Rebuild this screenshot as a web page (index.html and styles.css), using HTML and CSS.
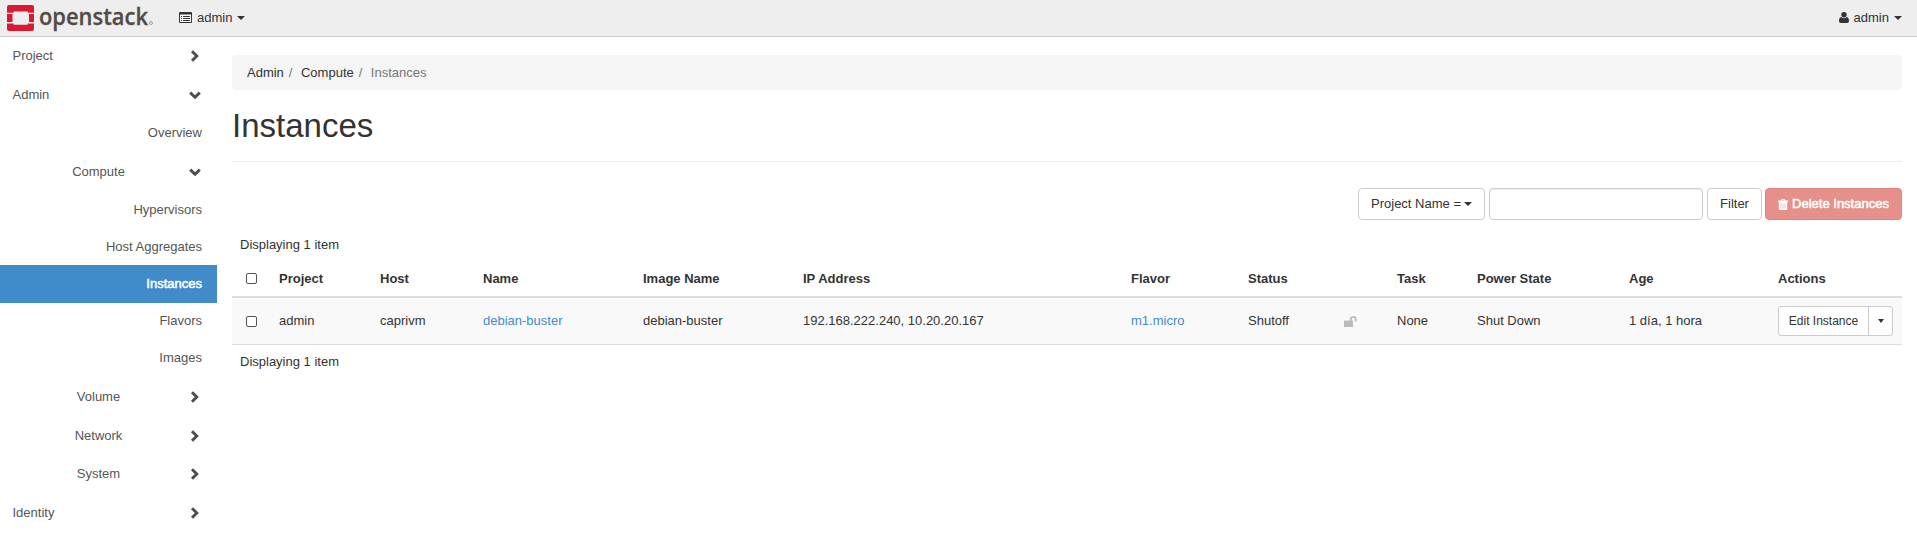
FILE: index.html
```html
<!DOCTYPE html>
<html lang="en">
<head>
<meta charset="utf-8">
<title>Instances</title>
<link rel="stylesheet" href="styles.css">
</head>
<body>
<svg width="0" height="0" class="defs">
  <symbol id="right" viewBox="0 0 12 12"><path d="M3 1.2 L7.8 6 L3 10.8" fill="none" stroke="#4d4d4d" stroke-width="2.9"/></symbol>
  <symbol id="down" viewBox="0 0 12 12"><path d="M1.2 3.6 L6 8.2 L10.8 3.6" fill="none" stroke="#4d4d4d" stroke-width="2.9"/></symbol>
</svg>
<header class="topbar">
  <a class="brand">
    <svg width="150" height="36" viewBox="0 0 150 36">
      <g fill="#da1a32">
        <path d="M9 5h23a2 2 0 0 1 2 2v5.700h-6.300v-1.200h-14v1.200H7V7a2 2 0 0 1 2-2z"/>
        <path d="M7 23.500h6.700v1.300h14v-1.300H34V29a2 2 0 0 1-2 2H9a2 2 0 0 1-2-2z"/>
        <path d="M7 14h5.500v8H7zM29 14h5v8h-5z"/>
      </g>
      <text class="wordmark" x="39" y="24.600" textLength="109" lengthAdjust="spacingAndGlyphs">openstack</text>
      <circle cx="151" cy="23" r="1.500" class="reg"/>
    </svg>
  </a>
  <a class="context">
    <svg width="13" height="11" viewBox="0 0 13 11"><path d="M.5 .5h12v10H.5z" fill="#fff" stroke="#333"/><path d="M1 1h11v1.500H1zM2 4h1v1H2zM4 4h7v1H4zM2 6h1v1H2zM4 6h7v1H4zM2 8h1v1H2zM4 8h7v1H4z" fill="#333"/></svg>
    <span>admin</span><i class="caret"></i>
  </a>
  <a class="user">
    <svg width="10" height="11" viewBox="0 0 10 11"><circle cx="5" cy="2.800" r="2.700" fill="#333"/><path d="M2.200 5a4 4 0 0 0 5.600 0C9.400 5.200 10 6.700 10 9c0 1.200-.8 2-1.800 2H1.800C.8 11 0 10.200 0 9c0-2.300.6-3.800 2.200-4z" fill="#333"/></svg>
    <span>admin</span><i class="caret"></i>
  </a>
</header>
<div class="layout">
  <nav class="sidebar">
    <a class="row top">Project<svg class="chev"><use href="#right"/></svg></a>
    <a class="row top">Admin<svg class="chev"><use href="#down"/></svg></a>
    <a class="row leaf tall">Overview</a>
    <a class="row group"><span>Compute</span><svg class="chev"><use href="#down"/></svg></a>
    <a class="row leaf">Hypervisors</a>
    <a class="row leaf">Host Aggregates</a>
    <a class="row leaf active">Instances</a>
    <a class="row leaf">Flavors</a>
    <a class="row leaf last">Images</a>
    <a class="row group"><span>Volume</span><svg class="chev"><use href="#right"/></svg></a>
    <a class="row group"><span>Network</span><svg class="chev"><use href="#right"/></svg></a>
    <a class="row group"><span>System</span><svg class="chev"><use href="#right"/></svg></a>
    <a class="row top">Identity<svg class="chev"><use href="#right"/></svg></a>
  </nav>
  <main class="content">
    <div class="breadcrumb"><a>Admin</a><i>/</i><a>Compute</a><i>/</i><span>Instances</span></div>
    <h1>Instances</h1>
    <div class="actions">
      <button class="btn select">Project Name =<i class="caret"></i></button>
      <input class="search" type="text">
      <button class="btn filter">Filter</button>
      <button class="btn danger"><svg width="10" height="11" viewBox="0 0 10 11"><path fill="#fff" fill-rule="evenodd" d="M0 1.500h3L3.500 0h3L7 1.500h3V3H0zM4 1.500h2L5.800 .8H4.200zM.8 3h8.400V10a1 1 0 0 1-1 1H1.800a1 1 0 0 1-1-1zM2.700 4.500v5h.5v-5zM4.750 4.500v5h.5v-5zM6.800 4.500v5h.5v-5z"/></svg>Delete Instances</button>
    </div>
    <div class="count">Displaying 1 item</div>
    <table class="grid">
      <colgroup><col class="c1"><col class="c2"><col class="c3"><col class="c4"><col class="c4"><col class="c6"><col class="c7"><col class="c8"><col class="c9"><col class="c10"><col class="c11"><col class="c12"><col class="c13"></colgroup>
      <thead><tr><th><i class="check"></i></th><th>Project</th><th>Host</th><th>Name</th><th>Image Name</th><th>IP Address</th><th>Flavor</th><th>Status</th><th></th><th>Task</th><th>Power State</th><th>Age</th><th>Actions</th></tr></thead>
      <tbody><tr><td><i class="check"></i></td><td>admin</td><td>caprivm</td><td><a class="link">debian-buster</a></td><td>debian-buster</td><td>192.168.222.240, 10.20.20.167</td><td><a class="link">m1.micro</a></td><td>Shutoff</td>
        <td><svg class="lock" width="13" height="11" viewBox="0 0 13 11"><rect x="0" y="4.500" width="9" height="6.500" rx=".6" fill="#bbb"/><path d="M6.800 5V3.300a2.450 2.450 0 0 1 4.900 0V5.500" fill="none" stroke="#bbb" stroke-width="1.700"/></svg></td>
        <td>None</td><td>Shut Down</td><td>1 día, 1 hora</td>
        <td><div class="split"><span class="edit">Edit Instance</span><span class="more"><i class="caret"></i></span></div></td></tr></tbody>
    </table>
    <div class="count bottom">Displaying 1 item</div>
  </main>
</div>
</body>
</html>
```
FILE: styles.css
```css
* { box-sizing: border-box; }
body { margin: 0; background: #fff; color: #333; font: 13px/18px "Liberation Sans", Arial, sans-serif; }
.defs { display: block; height: 0; }
.caret { display: inline-block; border: solid transparent; border-width: 4px 4px 0; border-top-color: #333; }

.topbar { height: 37px; background: #eee; border-bottom: 1px solid #ccc; display: flex; align-items: flex-start; }
.brand { width: 179px; height: 36px; }
.brand svg { display: block; overflow: visible; }
.wordmark { font: 600 23.500px "Open Sans", sans-serif; fill: #544b45; stroke: #544b45; stroke-width: .3px; }
.reg { fill: none; stroke: #999; stroke-width: .9; }
.context, .user { display: flex; align-items: center; height: 35px; }
.context svg, .user svg { margin-right: 5px; }
.context .caret, .user .caret { margin-left: 5px; }
.user { margin-left: auto; padding-right: 15px; }

.layout { display: flex; }
.sidebar { width: 217px; flex: none; color: #555; }
.row { display: flex; align-items: center; height: 38.600px; padding: 0 15px 0 12.500px; }
.chev { width: 12px; height: 12px; margin: 0 1px 0 auto; }
.top { justify-content: space-between; }
.group { padding-left: 0; height: 38.700px; }
.group span { width: 198px; margin-right: -8px; text-align: center; }
.group .chev { flex: none; }
.leaf { justify-content: flex-end; height: 37px; }
.tall { height: 38.600px; }
.active { height: 38px; margin-bottom: -1px; background: #428bca; color: #fff; -webkit-text-stroke: .5px #fff; }
.last { height: 38px; }

.content { flex: 1; padding: 18px 15px 0; }
.breadcrumb { display: flex; height: 35px; align-items: center; padding: 0 15px; background: #f5f5f5; border-radius: 4px; }
.breadcrumb i { font-style: normal; color: #777; padding: 0 8.500px 0 5px; }
.breadcrumb span { color: #777; }
h1 { margin: 17px 0 26px; height: 55px; border-bottom: 1px solid #eee; font-size: 33px; line-height: 37px; font-weight: 400; }
.actions { display: flex; justify-content: flex-end; height: 32px; }
.btn { height: 32px; font: inherit; color: #333; background: #fff; border: 1px solid #ccc; border-radius: 4px; padding: 0; display: flex; align-items: center; justify-content: center; }
.select { width: 127px; }
.select .caret { margin-left: 3px; }
.search { width: 214px; height: 32px; margin: 0 4px; border: 1px solid #ccc; border-radius: 4px; box-shadow: inset 0 1px 1px rgba(0, 0, 0, .075); }
.filter { width: 55px; }
.danger { width: 137px; margin-left: 3px; background: #e6908c; border-color: #e28480; color: #fff; -webkit-text-stroke: .5px #fff; }
.danger svg { margin-right: 4px; }

.count { padding: 16px 8px 0; height: 41px; }
.grid { width: 1670px; table-layout: fixed; border-collapse: separate; border-spacing: 0; }
.grid th, .grid td { padding: 0 0 0 8px; text-align: left; vertical-align: middle; white-space: nowrap; }
.grid th { height: 37px; border-bottom: 2px solid #ddd; }
.grid td { height: 47px; background: #f9f9f9; border-bottom: 1px solid #ddd; }
.c1 { width: 39px; } .c2 { width: 101px; } .c3 { width: 103px; } .c4 { width: 160px; }
.c6 { width: 328px; } .c7 { width: 117px; } .c8 { width: 96px; } .c9 { width: 53px; }
.c10 { width: 80px; } .c11 { width: 152px; } .c12 { width: 149px; } .c13 { width: 132px; }
.check { display: block; width: 11px; height: 11px; margin-left: 6px; border: 1px solid #555; border-radius: 2px; background: #fff; }
.link { color: #428bca; }
.lock { display: block; }
.split { display: flex; width: 115px; height: 30px; border: 1px solid #ccc; border-radius: 3px; background: #fff; font-size: 12px; line-height: 28px; }
.edit { width: 90px; text-align: center; border-right: 1px solid #ccc; }
.more { flex: 1; display: flex; align-items: center; justify-content: center; }
.more .caret { border-width: 4px 3.500px 0; }
.bottom { padding-top: 8px; }
```
